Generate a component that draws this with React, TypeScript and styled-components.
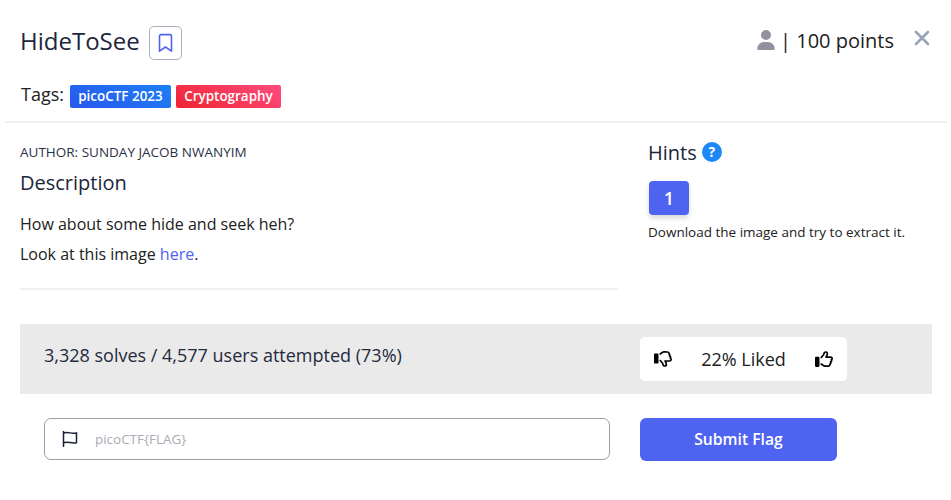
import React from "react";
import styled, { createGlobalStyle } from "styled-components";
import { FaRegThumbsUp, FaRegThumbsDown, FaUser } from "react-icons/fa6";

const GlobalStyle = createGlobalStyle`
  * { box-sizing: border-box; }
  body { margin: 0; background: #fff; }
  button, input { font-family: inherit; }
`;

const Dialog = styled.main`
  width: 951px;
  height: 500px;
  overflow: hidden;
  padding-top: 26px;
  font-family: "Open Sans", "Noto Sans", sans-serif;
  color: #212121;
  background: #fff;
`;

const Header = styled.header`
  height: 97px;
  margin: 0 4px 0 5px;
  padding: 0 17px 0 15px;
  border-bottom: 2px solid #f0f0f0;
`;

const TitleRow = styled.div`
  display: flex;
  height: 34px;
  align-items: flex-start;
`;

const Title = styled.h1`
  margin: 0;
  width: 129px;
  font-size: 24px;
  font-weight: 400;
  line-height: 30px;
  color: #20263a;
  white-space: nowrap;
`;

const BookmarkButton = styled.button`
  display: flex;
  width: 33px;
  height: 34px;
  padding: 0;
  align-items: center;
  justify-content: center;
  border: 1px solid #a9b0bd;
  border-radius: 5px;
  background: #fff;
  color: #4f63f1;
`;

const Points = styled.div`
  display: flex;
  margin-left: auto;
  font-size: 20px;
  line-height: 30px;
  white-space: pre;

  svg {
    margin: 4px 4px 0 0;
    color: #9191a0;
  }
`;

const CloseButton = styled.button`
  display: flex;
  width: 16px;
  height: 16px;
  margin: 4px 0 0 20px;
  padding: 0;
  border: 0;
  background: none;
  color: #98a2b8;
`;

const Tags = styled.div`
  display: flex;
  margin: 25px 0 0 1px;
  font-size: 18px;
  line-height: 18px;
`;

const TagsLabel = styled.span`
  width: 49px;
`;

const Tag = styled.span<{ $width: number; $from: string; $to: string }>`
  width: ${(p) => p.$width}px;
  height: 23px;
  margin-right: 5px;
  border-radius: 2px;
  background: linear-gradient(30deg, ${(p) => p.$from}, ${(p) => p.$to});
  color: #fff;
  font-size: 13.45px;
  font-weight: 600;
  line-height: 22px;
  text-align: center;
  white-space: nowrap;
`;

const Body = styled.div`
  display: grid;
  grid-template-columns: 598px 284px;
  column-gap: 30px;
  height: 201px;
  margin-left: 20px;
`;

const Details = styled.section`
  height: 167px;
  padding-top: 19px;
  border-bottom: 2px solid #f0f0f0;
`;

const Author = styled.div`
  font-size: 13.5px;
  line-height: 20px;
  color: #2b3147;
`;

const Subtitle = styled.h2`
  margin: 0;
  font-size: 20px;
  font-weight: 400;
  line-height: 28px;
  color: #20263a;
`;

const Description = styled.div`
  margin-top: 12px;
  font-size: 16px;
  line-height: 30px;
`;

const DetailsTitle = styled(Subtitle)`
  margin-top: 7px;
`;

const Link = styled.a`
  color: #4f63f1;
  text-decoration: none;
`;

const Hints = styled.section`
  padding-top: 16px;
`;

const HintsHeading = styled.div`
  display: flex;
  gap: 5px;
`;

const HelpBadge = styled.span`
  width: 20px;
  height: 20px;
  margin-top: 3px;
  border-radius: 50%;
  background: #1c87f5;
  color: #fff;
  font-size: 14px;
  font-weight: 700;
  line-height: 20px;
  text-align: center;
`;

const HintButton = styled.button`
  display: block;
  width: 40px;
  height: 34px;
  margin: 14px 0 0 1px;
  padding: 0;
  border: 0;
  border-radius: 4px;
  background: #4f63f1;
  box-shadow: 0 3px 5px rgba(0, 0, 0, 0.16);
  color: #fff;
  font-size: 18px;
  font-weight: 600;
  line-height: 34px;
`;

const HintText = styled.p`
  margin: 7px 0 0;
  font-size: 13.5px;
  line-height: 20px;
`;

const Stats = styled.section`
  display: flex;
  width: 912px;
  height: 70px;
  margin-left: 20px;
  padding: 13px 0 0 24px;
  background: #eaeaea;
`;

const Solves = styled.div`
  width: 596px;
  font-size: 18px;
  line-height: 36px;
  color: #252b3e;
`;

const Rating = styled.div`
  display: flex;
  width: 207px;
  height: 44px;
  padding: 0 14px;
  align-items: center;
  justify-content: space-between;
  border-radius: 5px;
  background: #fff;
  font-size: 18px;

  svg { color: #000; }
`;

const Submission = styled.form`
  display: flex;
  gap: 30px;
  margin: 24px 0 0 44px;
`;

const FlagField = styled.label`
  display: flex;
  width: 566px;
  height: 42px;
  padding-left: 17px;
  align-items: center;
  gap: 17px;
  border: 1px solid #9b9da8;
  border-radius: 7px;
  color: #172035;
`;

const FlagInput = styled.input`
  flex: 1;
  min-width: 0;
  padding: 0 0 1px;
  border: 0;
  outline: 0;
  background: none;
  font-size: 13.45px;

  &::placeholder { color: #aaacb5; opacity: 1; }
`;

const SubmitButton = styled.button`
  width: 197px;
  height: 43px;
  padding: 0 0 1px;
  border: 0;
  border-radius: 6px;
  background: #4f63f1;
  color: #fff;
  font-size: 15.7px;
  font-weight: 600;
`;

const BookmarkIcon = () => (
  <svg width="15" height="20" viewBox="0 0 15 20" fill="none" stroke="currentColor" strokeWidth="1.6" strokeLinejoin="round">
    <path d="M1.5 18.2V3q0-1.4 1.4-1.4h9.2q1.4 0 1.4 1.4v15.2l-6-4.2z" />
  </svg>
);

const CloseIcon = () => (
  <svg width="16" height="16" viewBox="0 0 16 16" fill="none" stroke="currentColor" strokeWidth="2.6" strokeLinecap="round">
    <path d="M2 2l12 12M14 2L2 14" />
  </svg>
);

const FlagIcon = () => (
  <svg width="16" height="16" viewBox="0 0 16 16" fill="none" stroke="currentColor" strokeWidth="1.5">
    <path d="M1.5 0v16M1.5 2c5-1.6 7.5 1.2 13 0v9.7c-5.5 1.3-8-1.8-13 0" />
  </svg>
);

export default function App() {
  return (
    <>
      <GlobalStyle />
      <Dialog>
        <Header>
          <TitleRow>
            <Title>HideToSee</Title>
            <BookmarkButton aria-label="Bookmark"><BookmarkIcon /></BookmarkButton>
            <Points><FaUser size={20} />| 100 points</Points>
            <CloseButton aria-label="Close"><CloseIcon /></CloseButton>
          </TitleRow>
          <Tags>
            <TagsLabel>Tags:</TagsLabel>
            <Tag $width={101} $from="#2957ee" $to="#1c80f4">picoCTF 2023</Tag>
            <Tag $width={105} $from="#ee2530" $to="#ff4c80">Cryptography</Tag>
          </Tags>
        </Header>
        <Body>
          <Details>
            <Author>AUTHOR: SUNDAY JACOB NWANYIM</Author>
            <DetailsTitle>Description</DetailsTitle>
            <Description>
              How about some hide and seek heh?<br />
              Look at this image <Link href="#">here</Link>.
            </Description>
          </Details>
          <Hints>
            <HintsHeading><Subtitle>Hints</Subtitle><HelpBadge>?</HelpBadge></HintsHeading>
            <HintButton>1</HintButton>
            <HintText>Download the image and try to extract it.</HintText>
          </Hints>
        </Body>
        <Stats>
          <Solves>3,328 solves / 4,577 users attempted (73%)</Solves>
          <Rating>
            <FaRegThumbsDown size={18} />
            <span>22% Liked</span>
            <FaRegThumbsUp size={18} />
          </Rating>
        </Stats>
        <Submission onSubmit={(e) => e.preventDefault()}>
          <FlagField><FlagIcon /><FlagInput aria-label="Flag" placeholder="picoCTF{FLAG}" /></FlagField>
          <SubmitButton>Submit Flag</SubmitButton>
        </Submission>
      </Dialog>
    </>
  );
}
